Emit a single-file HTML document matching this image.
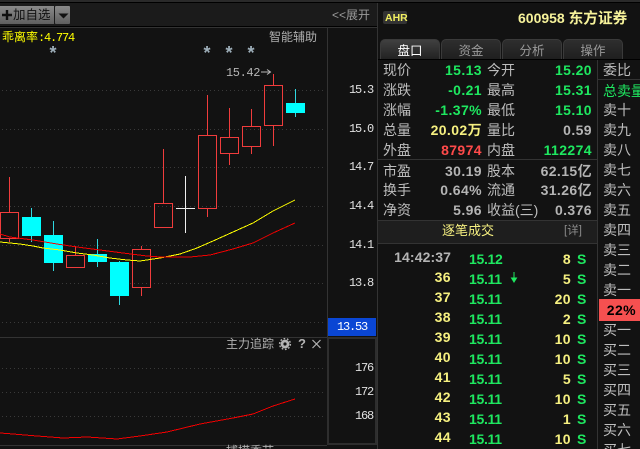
<!DOCTYPE html>
<html><head><meta charset="utf-8"><style>
html,body{margin:0;padding:0;background:#121212;}
#p{position:relative;width:640px;height:449px;overflow:hidden;background:#121212;font-family:"Liberation Sans","WenQuanYi Zen Hei","Noto Sans CJK SC",sans-serif;font-size:14px;color:#bdbdbd;}
#p div{position:absolute;white-space:nowrap;}
.r{line-height:20px;height:20px;}
.l{font-size:14px;color:#bdbdbd;letter-spacing:0;}
.n{font-weight:bold;font-size:14px;text-align:right;letter-spacing:.4px;}
#p .pr{left:469px;letter-spacing:-.3px;}
.g{color:#1ee860}.w{color:#b4b4b4}.y{color:#f6f080}.rd{color:#ff4a4a}
.ax{font-family:"Liberation Mono",monospace;font-size:12px;letter-spacing:-1.2px;color:#e0e0e0;left:328px;width:45px;text-align:right;line-height:14px;}
.tab{top:39px;height:20px;background:linear-gradient(#2e2e2e,#1f1f1f);border-radius:5px 5px 0 0;text-align:center;line-height:22px;color:#9a9a9a;font-size:12.5px;border:1px solid #3a3a3a;border-bottom:0;box-sizing:border-box;}
</style></head><body><div id="p">
<svg style="position:absolute;left:0;top:0" width="640" height="449" xmlns="http://www.w3.org/2000/svg">
<rect x="0" y="0" width="640" height="2" fill="#2a2a2a"/>
<rect x="0" y="2" width="640" height="1" fill="#000"/>
<rect x="0" y="3" width="377" height="23" fill="#1b1b1b"/>
<rect x="0" y="26" width="377" height="1" fill="#000"/>
<rect x="0" y="27" width="377" height="1" fill="#333"/>
<defs><linearGradient id="b" x1="0" y1="0" x2="0" y2="1"><stop offset="0" stop-color="#8a8a8a"/><stop offset="1" stop-color="#5f5f5f"/></linearGradient></defs>
<rect x="0" y="6" width="54" height="18" fill="url(#b)"/>
<rect x="55" y="6" width="15" height="18" rx="1" fill="url(#b)"/>
<path d="M58.5 13.5h10l-5 5z" fill="#111"/>
<path d="M7 10v10M2 15h10" stroke="#111" stroke-width="2.4" fill="none"/>
<g stroke="#3a3a3a" stroke-dasharray="1 3" stroke-width="1" shape-rendering="crispEdges">
<path d="M2 90.5H326M2 129.5H326M2 167.5H326M2 206.5H326M2 245.5H326M2 283.5H326M2 322.5H326M2 368.5H326M2 392.5H326M2 416.5H326"/>
</g>
<rect x="327" y="27" width="1" height="310" fill="#333"/>
<rect x="377" y="3" width="1" height="446" fill="#333"/>
<rect x="0" y="337" width="327" height="1" fill="#333"/>
<rect x="0" y="445" width="327" height="1" fill="#333"/>
<rect x="328" y="338" width="48" height="106" fill="none" stroke="#2e2e2e" stroke-width="2"/>
<rect x="328" y="318" width="48" height="18" fill="#0a46d4"/>
<g shape-rendering="crispEdges" fill="none" stroke="#f03c3c" stroke-width="1">
<path d="M273.5 74V85M273.5 125V146M251.5 109V126M251.5 147V154M229.5 108V137M229.5 153V165M207.5 95V135M207.5 209V217M163.5 149V203M141.5 246V249M141.5 288V296M75.5 246V255M9.5 177V212M9.5 238V242"/>
<rect x="264.5" y="85.5" width="18" height="40"/>
<rect x="242.5" y="126.5" width="18" height="20"/>
<rect x="220.5" y="137.5" width="18" height="16"/>
<rect x="198.5" y="135.5" width="18" height="73"/>
<rect x="154.5" y="203.5" width="18" height="24"/>
<rect x="132.5" y="249.5" width="18" height="38"/>
<rect x="66.5" y="255.5" width="18" height="12"/>
<rect x="0.5" y="212.5" width="18" height="26"/>
</g>
<g shape-rendering="crispEdges">
<path d="M185.5 176V233M176 208.5H195" stroke="#eee" stroke-width="1" fill="none"/>
<path d="M295.5 89V117M119.5 261V305M97.5 239V267M53.5 221V271M31.5 208V242" stroke="#2fd8e0" stroke-width="1" fill="none"/>
<g fill="#00ffff">
<rect x="286" y="103" width="19" height="10"/>
<rect x="110" y="262" width="19" height="34"/>
<rect x="88" y="254" width="19" height="8"/>
<rect x="44" y="235" width="19" height="28"/>
<rect x="22" y="217" width="19" height="19"/>
</g></g>
<polyline shape-rendering="crispEdges" fill="none" stroke="#ffff00" stroke-width="1" points="0,242 10,243 20,244 33,246 43,248 60,250 77,253 93,255 110,258 127,260 140,261 160,258 180,254 197,248 213,241 233,232 253,223 273,211 295,200"/>
<polyline shape-rendering="crispEdges" fill="none" stroke="#f00000" stroke-width="1" points="0,234 10,237 33,240 57,244 77,247 100,250 123,253 147,256 160,257 190,257 210,255 233,249 253,243 273,233 295,223"/>
<polyline shape-rendering="crispEdges" fill="none" stroke="#f00000" stroke-width="1" points="0,433 13,434 37,436 63,438 87,437 117,439 140,436 167,432 200,424 233,418 253,414 273,406 295,399"/>
<path d="M261 72h9M267 69.5l3.5 2.5-3.5 2.5" stroke="#b8b8b8" stroke-width="1" fill="none"/>
<g fill="#9fb0bb" font-family="Liberation Sans" font-weight="bold" font-size="18" text-anchor="middle">
<text x="53" y="59">*</text><text x="207" y="59">*</text><text x="229" y="59">*</text><text x="251" y="59">*</text>
</g>
<circle cx="285" cy="344" r="4.4" fill="#b4b4b4"/><circle cx="285" cy="344" r="1.6" fill="#121212"/>
<circle cx="285" cy="344" r="5.4" fill="none" stroke="#b4b4b4" stroke-width="1.4" stroke-dasharray="1.7 1.7"/>
<path d="M312.5 340l8 8M320.5 340l-8 8" stroke="#b4b4b4" stroke-width="1.2" fill="none"/>
<rect x="383" y="11" width="24" height="13" rx="2" fill="#333"/>
<rect x="378" y="59" width="262" height="1" fill="#000"/>
<rect x="597" y="60" width="1" height="389" fill="#333"/>
<rect x="597" y="79" width="43" height="1" fill="#333"/>
<rect x="378" y="159" width="219" height="1" fill="#333"/>
<rect x="378" y="220" width="219" height="23" fill="#1e1e1e"/>
<rect x="378" y="220" width="219" height="1" fill="#333"/>
<rect x="378" y="243" width="219" height="1" fill="#333"/>
<rect x="599" y="299" width="41" height="22" fill="#f55050"/>
<path d="M514 272v9M511.5 278l2.5 4 2.5-4z" stroke="#1ee860" fill="#1ee860" stroke-width="1"/>
</svg>
<div style="left:13px;top:5px;font-size:12.5px;color:#111;line-height:20px;">加自选</div>
<div style="left:2px;top:29px;font-size:12px;color:#ffff00;line-height:16px;">乖离率<span style="font-family:'Liberation Mono',monospace;letter-spacing:-1.2px;">:4.774</span></div>
<div style="left:269px;top:29px;font-size:12px;color:#b0b0b0;line-height:16px;">智能辅助</div>
<div style="left:226px;top:66px;font-family:'Liberation Mono',monospace;font-size:12px;letter-spacing:-.4px;color:#b4b4b4;line-height:14px;">15.42</div>
<div style="left:332px;top:7px;font-size:12px;color:#9a9a9a;line-height:16px;">&lt;&lt;展开</div>
<div style="left:226px;top:336px;font-size:12px;color:#b0b0b0;line-height:16px;">主力追踪</div>
<div style="left:298px;top:336px;font-size:13px;font-weight:bold;color:#b4b4b4;line-height:16px;">?</div>
<div style="left:226px;top:443px;font-size:12px;color:#b0b0b0;line-height:16px;">捕捞季节</div>
<div class="ax" style="top:83px">15.3</div><div class="ax" style="top:122px">15.0</div><div class="ax" style="top:160px">14.7</div><div class="ax" style="top:199px">14.4</div><div class="ax" style="top:238px">14.1</div><div class="ax" style="top:276px">13.8</div>
<div class="ax" style="top:320px;color:#fff;left:328px;width:48px;text-align:center">13.53</div>
<div class="ax" style="top:361px">176</div><div class="ax" style="top:385px">172</div><div class="ax" style="top:409px">168</div>
<div style="left:385px;top:11px;font-size:10.5px;font-weight:bold;color:#f0ee60;line-height:14px;">AHR</div>
<div style="left:518px;top:9px;font-size:14px;font-weight:bold;color:#f6f29a;line-height:18px;">600958 <span style="font-size:14.7px;">东方证券</span></div>
<div class="tab" style="left:380px;width:60px;background:linear-gradient(#404040,#222);color:#fff;">盘口</div>
<div class="tab" style="left:441px;width:60px;">资金</div>
<div class="tab" style="left:502px;width:60px;">分析</div>
<div class="tab" style="left:563px;width:60px;">操作</div>
<div class="r l" style="left:383px;top:60px">现价</div><div class="r n g" style="left:430px;width:52px;top:60px">15.13</div><div class="r l" style="left:487px;top:60px">今开</div><div class="r n g" style="left:540px;width:52px;top:60px">15.20</div>
<div class="r l" style="left:383px;top:80px">涨跌</div><div class="r n g" style="left:430px;width:52px;top:80px">-0.21</div><div class="r l" style="left:487px;top:80px">最高</div><div class="r n g" style="left:540px;width:52px;top:80px">15.31</div>
<div class="r l" style="left:383px;top:100px">涨幅</div><div class="r n g" style="left:420px;width:62px;top:100px">-1.37%</div><div class="r l" style="left:487px;top:100px">最低</div><div class="r n g" style="left:540px;width:52px;top:100px">15.10</div>
<div class="r l" style="left:383px;top:120px">总量</div><div class="r n y" style="left:420px;width:62px;top:120px">20.02万</div><div class="r l" style="left:487px;top:120px">量比</div><div class="r n w" style="left:540px;width:52px;top:120px">0.59</div>
<div class="r l" style="left:383px;top:140px">外盘</div><div class="r n rd" style="left:430px;width:52px;top:140px">87974</div><div class="r l" style="left:487px;top:140px">内盘</div><div class="r n g" style="left:530px;width:62px;top:140px">112274</div>
<div class="r l" style="left:383px;top:161px">市盈</div><div class="r n w" style="left:430px;width:52px;top:161px">30.19</div><div class="r l" style="left:487px;top:161px">股本</div><div class="r n w" style="left:530px;width:62px;top:161px">62.15亿</div>
<div class="r l" style="left:383px;top:180px">换手</div><div class="r n w" style="left:430px;width:52px;top:180px">0.64%</div><div class="r l" style="left:487px;top:180px">流通</div><div class="r n w" style="left:530px;width:62px;top:180px">31.26亿</div>
<div class="r l" style="left:383px;top:200px">净资</div><div class="r n w" style="left:430px;width:52px;top:200px">5.96</div><div class="r l" style="left:487px;top:200px">收益(三)</div><div class="r n w" style="left:540px;width:52px;top:200px">0.376</div>
<div class="r" style="left:442px;top:221px;color:#f6f080;font-size:13px;">逐笔成交</div>
<div class="r" style="left:564px;top:221px;color:#8a8a8a;font-size:11.5px;">[详]</div>
<div class="r n w" style="left:390px;width:61px;top:247px;letter-spacing:.1px;">14:42:37</div><div class="r n g pr" style="top:249px">15.12</div><div class="r n y" style="left:550px;width:21px;top:249px">8</div><div class="r n g" style="left:577px;top:249px">S</div>
<div class="r n y" style="left:420px;width:31px;top:267px;">36</div><div class="r n g pr" style="top:269px">15.11</div><div class="r n y" style="left:550px;width:21px;top:269px">5</div><div class="r n g" style="left:577px;top:269px">S</div>
<div class="r n y" style="left:420px;width:31px;top:287px;">37</div><div class="r n g pr" style="top:289px">15.11</div><div class="r n y" style="left:550px;width:21px;top:289px">20</div><div class="r n g" style="left:577px;top:289px">S</div>
<div class="r n y" style="left:420px;width:31px;top:307px;">38</div><div class="r n g pr" style="top:309px">15.11</div><div class="r n y" style="left:550px;width:21px;top:309px">2</div><div class="r n g" style="left:577px;top:309px">S</div>
<div class="r n y" style="left:420px;width:31px;top:327px;">39</div><div class="r n g pr" style="top:329px">15.11</div><div class="r n y" style="left:550px;width:21px;top:329px">10</div><div class="r n g" style="left:577px;top:329px">S</div>
<div class="r n y" style="left:420px;width:31px;top:347px;">40</div><div class="r n g pr" style="top:349px">15.11</div><div class="r n y" style="left:550px;width:21px;top:349px">10</div><div class="r n g" style="left:577px;top:349px">S</div>
<div class="r n y" style="left:420px;width:31px;top:367px;">41</div><div class="r n g pr" style="top:369px">15.11</div><div class="r n y" style="left:550px;width:21px;top:369px">5</div><div class="r n g" style="left:577px;top:369px">S</div>
<div class="r n y" style="left:420px;width:31px;top:387px;">42</div><div class="r n g pr" style="top:389px">15.11</div><div class="r n y" style="left:550px;width:21px;top:389px">10</div><div class="r n g" style="left:577px;top:389px">S</div>
<div class="r n y" style="left:420px;width:31px;top:407px;">43</div><div class="r n g pr" style="top:409px">15.11</div><div class="r n y" style="left:550px;width:21px;top:409px">1</div><div class="r n g" style="left:577px;top:409px">S</div>
<div class="r n y" style="left:420px;width:31px;top:427px;">44</div><div class="r n g pr" style="top:429px">15.11</div><div class="r n y" style="left:550px;width:21px;top:429px">10</div><div class="r n g" style="left:577px;top:429px">S</div>
<div class="r l" style="left:603px;top:60px">委比</div>
<div class="r l" style="left:603px;top:81px;color:#1ee860">总卖量</div>
<div class="r l" style="left:603px;top:100px">卖十</div><div class="r l" style="left:603px;top:120px">卖九</div><div class="r l" style="left:603px;top:140px">卖八</div><div class="r l" style="left:603px;top:160px">卖七</div><div class="r l" style="left:603px;top:180px">卖六</div><div class="r l" style="left:603px;top:200px">卖五</div><div class="r l" style="left:603px;top:220px">卖四</div><div class="r l" style="left:603px;top:240px">卖三</div><div class="r l" style="left:603px;top:260px">卖二</div><div class="r l" style="left:603px;top:280px">卖一</div>
<div class="r n" style="left:600px;width:36px;top:300px;color:#000">22%</div>
<div class="r l" style="left:603px;top:320px">买一</div><div class="r l" style="left:603px;top:340px">买二</div><div class="r l" style="left:603px;top:360px">买三</div><div class="r l" style="left:603px;top:380px">买四</div><div class="r l" style="left:603px;top:400px">买五</div><div class="r l" style="left:603px;top:420px">买六</div><div class="r l" style="left:603px;top:440px">买七</div>
</div></body></html>
